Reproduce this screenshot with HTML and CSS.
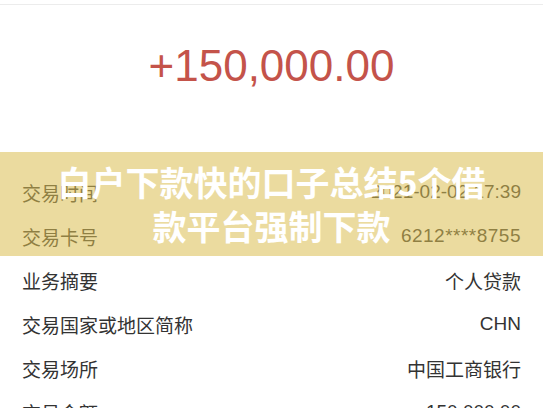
FILE: index.html
```html
<!DOCTYPE html>
<html lang="zh-CN">
<head>
    <meta charset="UTF-8">
    <meta name="viewport" content="width=device-width, initial-scale=1.0">
    <title>交易详情</title>
    <link rel="stylesheet" href="styles.css">
</head>
<body>
    <div class="page">
        <div class="topbar"></div>

        <div class="amount">+150,000.00</div>

        <div class="detail-list">
            <div class="row">
                <span class="label">交易时间</span>
                <span class="value">2021-02-02 17:39</span>
            </div>
            <div class="row">
                <span class="label">交易卡号</span>
                <span class="value card">6212****8755</span>
            </div>
            <div class="row">
                <span class="label">业务摘要</span>
                <span class="value">个人贷款</span>
            </div>
            <div class="row">
                <span class="label">交易国家或地区简称</span>
                <span class="value">CHN</span>
            </div>
            <div class="row">
                <span class="label">交易场所</span>
                <span class="value">中国工商银行</span>
            </div>
            <div class="row">
                <span class="label">交易金额</span>
                <span class="value">150,000.00</span>
            </div>
        </div>

        <!-- 标题横幅，盖在列表上面 -->
        <div class="banner">
            <h1>白户下款快的口子总结5个借<br>款平台强制下款</h1>
        </div>
    </div>
</body>
</html>
```

FILE: styles.css
```css
html, body {
    margin: 0;
    padding: 0;
    background-color: #fff;
}
body {
    font-family: "Liberation Sans", "Noto Sans CJK SC", sans-serif;
    overflow: hidden;
}
.page {
    position: relative;
    width: 543px;
    height: 408px;
    overflow: hidden;
}
.topbar {
    height: 4px;
    border-bottom: 1px solid #ececec;
}
.amount {
    height: 165px;
    box-sizing: border-box;
    padding-top: 35px;
    text-align: center;
    font-size: 44px;
    line-height: 52px;
    color: #c4534a;
}
.row {
    height: 44px;
    display: flex;
    align-items: center;
    justify-content: space-between;
    padding: 0 22px;
    font-size: 19px;
    color: #333;
}
.card {
    letter-spacing: 0.5px;
}
.banner {
    position: absolute;
    left: 0;
    top: 152px;
    width: 100%;
    height: 104px;
    background-color: rgba(218, 190, 80, 0.55);
    display: flex;
    align-items: center;
    justify-content: center;
}
.banner h1 {
    margin: 0;
    text-align: center;
    color: #fff;
    font-family: "Noto Sans CJK SC", sans-serif;
    font-weight: bold;
    font-size: 34px;
    line-height: 44px;
}
```
